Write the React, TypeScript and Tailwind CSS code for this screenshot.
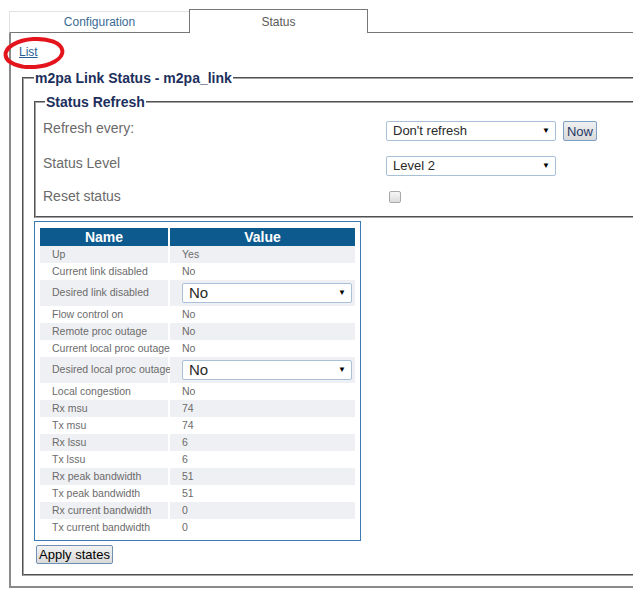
import React from "react";

type Row = {
  name: string;
  value: string;
  select?: boolean;
};

const rows: Row[] = [
  { name: "Up", value: "Yes" },
  { name: "Current link disabled", value: "No" },
  { name: "Desired link disabled", value: "No", select: true },
  { name: "Flow control on", value: "No" },
  { name: "Remote proc outage", value: "No" },
  { name: "Current local proc outage", value: "No" },
  { name: "Desired local proc outage", value: "No", select: true },
  { name: "Local congestion", value: "No" },
  { name: "Rx msu", value: "74" },
  { name: "Tx msu", value: "74" },
  { name: "Rx lssu", value: "6" },
  { name: "Tx lssu", value: "6" },
  { name: "Rx peak bandwidth", value: "51" },
  { name: "Tx peak bandwidth", value: "51" },
  { name: "Rx current bandwidth", value: "0" },
  { name: "Tx current bandwidth", value: "0" },
];

function FakeSelect({ text, big }: { text: string; big?: boolean }) {
  return (
    <div
      className={`w-[170px] h-[20px] shrink-0 flex items-center justify-between bg-white border border-[#a8c0d8] rounded-[2px] pl-[6px] pr-[5px] text-[#2a2a2a] ${
        big ? "text-[15px]" : "text-[13px]"
      }`}
    >
      <span className="leading-[18px] whitespace-nowrap">{text}</span>
      <span className="text-[8px] text-black leading-none">▼</span>
    </div>
  );
}

export default function App() {
  return (
    <div className="relative w-[633px] h-[600px] overflow-hidden bg-white font-['Liberation_Sans',Arial,sans-serif]">
      {/* tabs */}
      <div className="flex items-end pt-[9px] pl-[9px] w-[700px]">
        <div className="w-[180px] shrink-0 h-[22px] flex items-center justify-center border-t border-l border-[#e2e2e2] border-b border-b-[#777] text-[12px] text-[#3a6b94]">
          Configuration
        </div>
        <div className="w-[179px] shrink-0 h-[24px] flex items-center justify-center border-l border-t border-r border-[#777] text-[12px] text-[#5a5a5a]">
          Status
        </div>
        <div className="flex-1 border-b border-[#777]"></div>
      </div>

      {/* tab body */}
      <div className="ml-[9px] w-[700px] h-[555px] border-l-2 border-b-2 border-[#8a8a8a]">
        <div className="pt-[12px] pl-[8px] h-[26px] text-[12px] leading-[14px]">
          <a className="text-[#2a5d94] underline">List</a>
        </div>

        <fieldset className="mt-[10px] ml-[11px] w-[680px] border-2 border-[#a4a4a4] [border-style:groove] px-[10px] pt-[6px] pb-[8px]">
          <legend className="px-[1px] text-[14px] leading-[18px] font-bold text-[#1d2f5c]">
            m2pa Link Status - m2pa_link
          </legend>

          <fieldset className="w-[660px] border-2 border-[#a4a4a4] [border-style:groove] pl-[7px] pt-[9px]">
            <legend className="ml-[2px] px-[1px] text-[14px] leading-[18px] font-bold text-[#1d2f5c]">
              Status Refresh
            </legend>
            <div className="flex h-[35px] text-[14px] text-[#6a6a6a]">
              <div className="w-[343px] shrink-0 leading-[16px]">Refresh every:</div>
              <div className="flex mt-[1px]">
                <FakeSelect text="Don't refresh" />
                <button className="ml-[7px] w-[34px] h-[20px] border border-[#7b9fc6] rounded-[2px] bg-gradient-to-b from-[#f0f0f0] to-[#d9d9d9] text-[13px] text-[#1f3866]">
                  Now
                </button>
              </div>
            </div>
            <div className="flex h-[33px] text-[14px] text-[#6a6a6a]">
              <div className="w-[343px] shrink-0 leading-[16px]">Status Level</div>
              <div className="mt-[1px]">
                <FakeSelect text="Level 2" />
              </div>
            </div>
            <div className="flex h-[28px] text-[14px] text-[#6a6a6a]">
              <div className="w-[343px] shrink-0 leading-[16px]">Reset status</div>
              <span className="mt-[3px] ml-[3px] w-[12px] h-[12px] border border-[#a9a9a9] rounded-[2px] bg-gradient-to-b from-[#f6f6f6] to-[#dcdcdc]"></span>
            </div>
          </fieldset>

          {/* status table */}
          <div className="mt-[3px] w-[327px] border border-[#3b7ab3] pt-[6px] pl-[5px] pb-[4px]">
            <div className="grid grid-cols-[128px_185px] gap-x-[2px]">
              <div className="h-[18px] bg-[#0d5a8e] text-white font-bold text-[14px] leading-[18px] text-center">
                Name
              </div>
              <div className="h-[18px] bg-[#0d5a8e] text-white font-bold text-[14px] leading-[18px] text-center">
                Value
              </div>
              {rows.map((r, i) => {
                const bg = i % 2 === 0 ? "bg-[#eff0f3]" : "bg-white";
                const h = r.select ? "h-[26px]" : "h-[17px]";
                return (
                  <React.Fragment key={r.name}>
                    <div className={`${h} ${bg} flex items-center pl-[12px] text-[10.5px] text-[#6b6b6b] whitespace-nowrap`}>
                      {r.name}
                    </div>
                    <div className={`${h} ${bg} flex items-center pl-[12px] text-[10.5px] text-[#6b6b6b] whitespace-nowrap`}>
                      {r.select ? <FakeSelect text={r.value} big /> : r.value}
                    </div>
                  </React.Fragment>
                );
              })}
            </div>
          </div>

          <button className="mt-[4px] ml-[2px] w-[77px] h-[19px] border border-[#6f90b3] rounded-[2px] bg-gradient-to-b from-[#f2f2f2] to-[#dadada] text-[13px] leading-[17px] text-black whitespace-nowrap">
            Apply states
          </button>
        </fieldset>
      </div>

      {/* red highlight round the List link */}
      <svg className="absolute left-[2px] top-[35px]" width="64" height="36" viewBox="0 0 64 36">
        <ellipse cx="32" cy="18" rx="28.5" ry="14" transform="rotate(-4 32 18)" fill="none" stroke="#e3141b" strokeWidth="4" />
      </svg>
    </div>
  );
}
